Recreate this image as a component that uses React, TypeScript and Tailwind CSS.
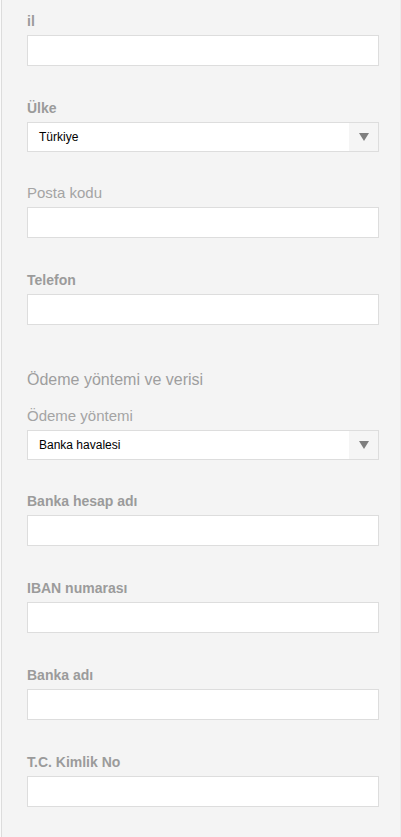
import React from 'react'

type Field = {
  label: string
  bold?: boolean
  select?: string
  gap: string
}

const addressFields: Field[] = [
  { label: 'il', bold: true, gap: 'mt-0' },
  { label: 'Ülke', bold: true, select: 'Türkiye', gap: 'mt-[32px]' },
  { label: 'Posta kodu', gap: 'mt-[31px]' },
  { label: 'Telefon', bold: true, gap: 'mt-[32px]' },
]

const paymentFields: Field[] = [
  { label: 'Ödeme yöntemi', select: 'Banka havalesi', gap: 'mt-[15px]' },
  { label: 'Banka hesap adı', bold: true, gap: 'mt-[31px]' },
  { label: 'IBAN numarası', bold: true, gap: 'mt-[32px]' },
  { label: 'Banka adı', bold: true, gap: 'mt-[32px]' },
  { label: 'T.C. Kimlik No', bold: true, gap: 'mt-[32px]' },
]

function FormField({ field }: { field: Field }) {
  return (
    <div className={field.gap}>
      <label
        className={
          field.bold
            ? 'block text-[14px] font-bold leading-[20px] text-[#9b9b9b] mb-[4px]'
            : 'block text-[15px] font-normal leading-[20px] text-[#a4a4a4] mb-[4px]'
        }
      >
        {field.label}
      </label>
      {field.select ? (
        <div className="flex h-[30px] items-stretch border border-[#dddddd] bg-white">
          <div className="flex flex-1 items-center pl-[11px] text-[12px] text-black">
            {field.select}
          </div>
          <div className="flex w-[29px] items-center justify-center bg-[#f5f5f5]">
            <svg width="10" height="8" viewBox="0 0 10 8">
              <polygon points="0,0 10,0 5,8" fill="#7f7f7f" />
            </svg>
          </div>
        </div>
      ) : (
        <input
          type="text"
          className="block h-[31px] w-full border border-[#dddddd] bg-white outline-none"
        />
      )}
    </div>
  )
}

export default function App() {
  return (
    <div className="min-h-screen bg-[#fafafa] pl-px font-['Liberation_Sans',Arial,sans-serif]">
      <div className="min-h-screen border-l border-r border-l-[#dcdcdc] border-r-[#ececec] bg-[#f4f4f4] pl-[25px] pr-[21px] pt-[11px] pb-[30px]">
        {addressFields.map((f) => (
          <FormField key={f.label} field={f} />
        ))}

        {/* Payment section */}
        <h2 className="mt-[44px] text-[16px] font-normal leading-[22px] text-[#9e9e9e]">
          Ödeme yöntemi ve verisi
        </h2>

        {paymentFields.map((f) => (
          <FormField key={f.label} field={f} />
        ))}
      </div>
    </div>
  )
}
